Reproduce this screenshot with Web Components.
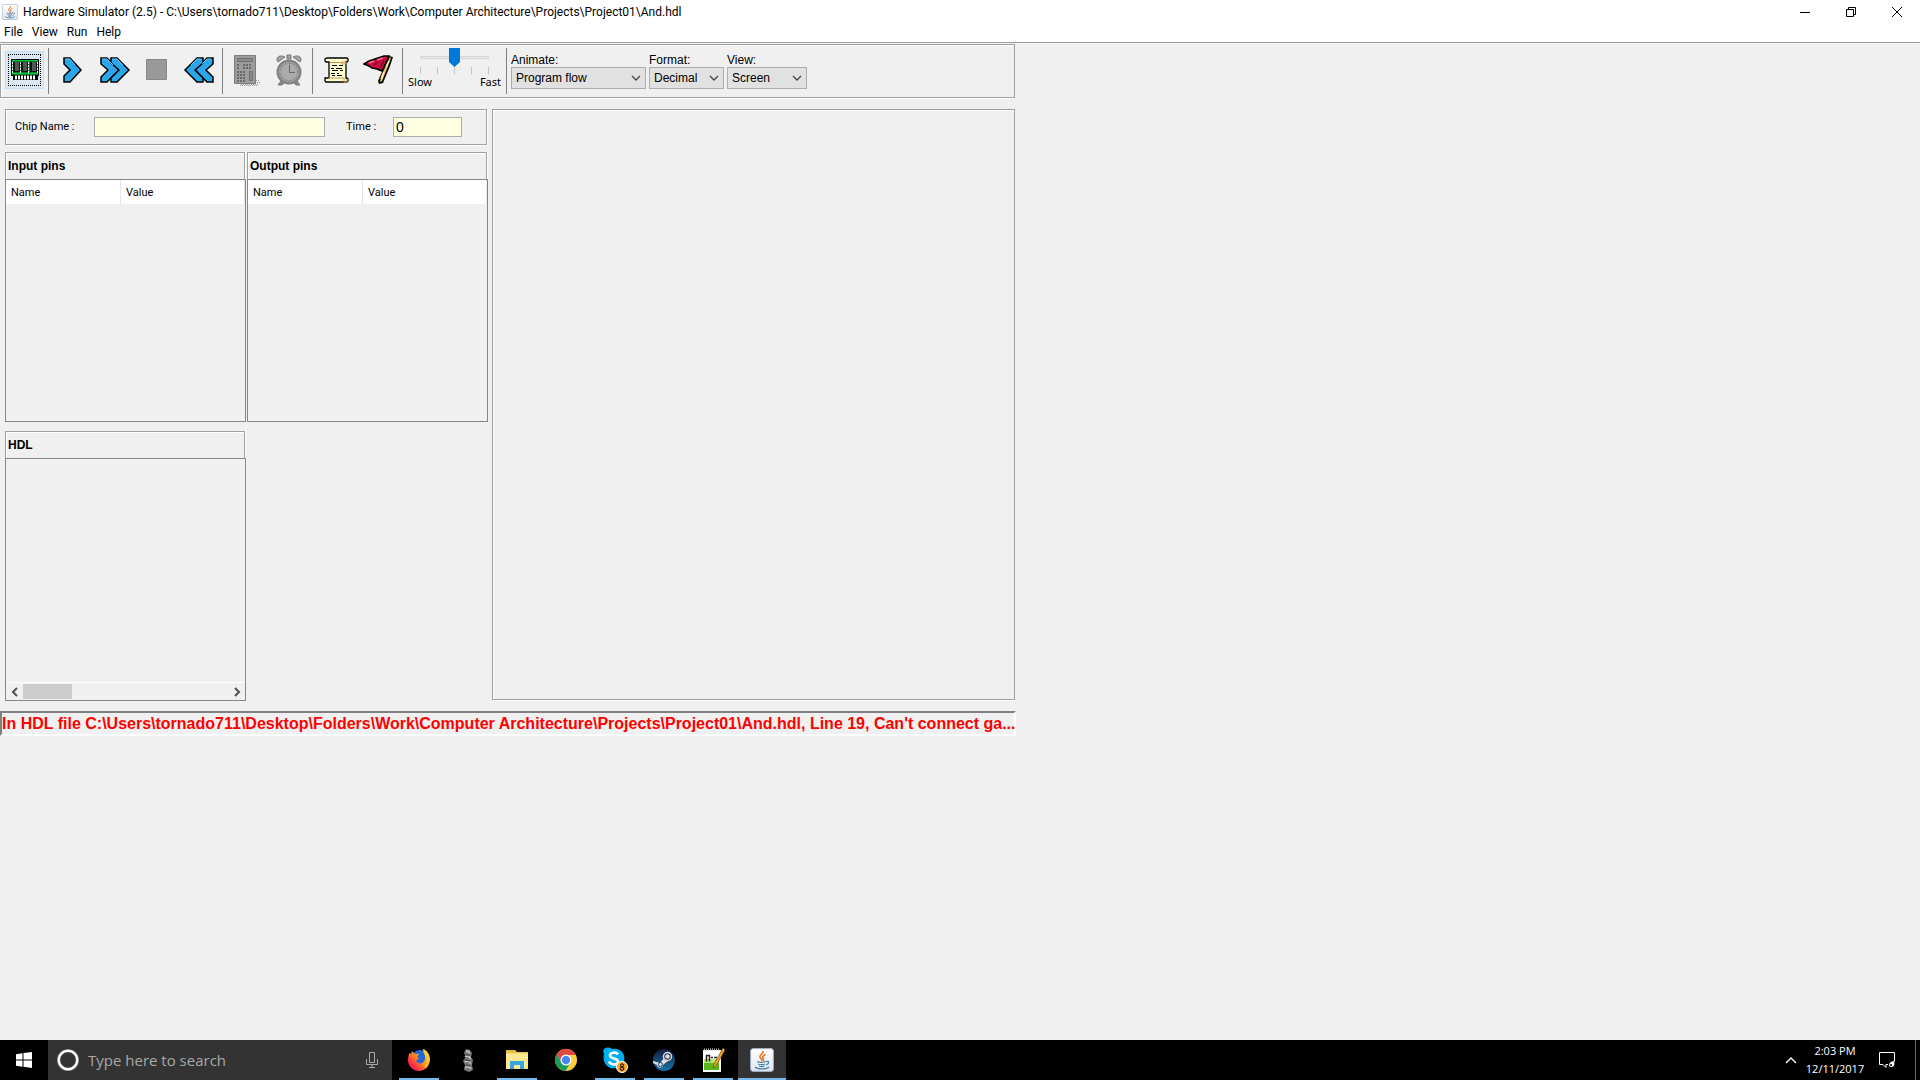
<!DOCTYPE html>
<html lang="en">
<head>
<meta charset="utf-8">
<title>Hardware Simulator (2.5)</title>
<style>
    body { margin: 0; background: #f0f0f0; color: #000; font: 12px/16px "Open Sans", "Noto Sans", sans-serif; }
</style>
</head>
<body>
<desktop-screen>
    <title-bar slot="window">Hardware Simulator (2.5) - C:\Users\tornado711\Desktop\Folders\Work\Computer Architecture\Projects\Project01\And.hdl</title-bar>
    <menu-bar slot="window"></menu-bar>
    <hardware-simulator slot="window"></hardware-simulator>
    <task-bar slot="taskbar"></task-bar>
</desktop-screen>

<script>
// every drawing of the page, by name: [width, height, markup]
const icons = {
    java: [24, 24, `
        <defs><linearGradient id="j" x2="0" y2="1"><stop offset="0" stop-color="#fff"/><stop offset="1" stop-color="#dfe7f1"/></linearGradient></defs>
        <rect x=".6" y=".6" width="22.800" height="22.800" rx="2.500" fill="url(#j)" stroke="#9fb0c2"/>
        <path d="M12.500 3c2 2-3.500 4-2.500 6 .5 1.300 2 2 1.500 3.500M15.500 6.500c-2 1-3.500 2-2.500 3.500s.8 2-.5 3" fill="none" stroke="#e76f1d" stroke-width="1.500"/>
        <path d="M7 13.500c3 1 7 .8 9 0M8 16c2 .8 5 .8 7 0M9 18c1.500.6 4 .6 5.500 0M5 19c2 2.500 11.500 2.500 14 0M16 13.500c3-1 4 2 0 3.300" fill="none" stroke="#5382a1" stroke-width="1.300"/>`],
    minimize: [10, 10, `<path d="M0 5.500h10" stroke="#000"/>`],
    restore: [10, 10, `<path d="M.5 2.500h7v7h-7zM2.500 2.500v-2h7v7h-2" fill="none" stroke="#000"/>`],
    close: [10, 10, `<path d="M0 0l10 10M10 0L0 10" stroke="#000"/>`],
    chip: [28, 22, `
        <path d="M0 0h28v17h-1v4H2v-4H0z" fill="#000"/>
        <path d="M1 1h26v15H1z" fill="#00802b"/>
        <path d="M1 1.500h26M1 14.500h26" stroke="#12c33c"/>
        <path d="M2 3h7v10H2zM10 3h7v10h-7zM19 3h7v10h-7z" fill="#111"/>
        <path d="M4 3h4v9H4zM12 3h4v9h-4zM21 3h4v9h-4z" fill="#555"/>
        <path d="M1.500 3v11M9.500 3v11M17.500 3v11M26.500 3v11" stroke="#fff" stroke-dasharray="2 1"/>
        <path d="M4 18.500h21" stroke="#fff" stroke-width="4" stroke-dasharray="2 1"/>`],
    step: [22, 28, `<path d="M2 2h6l11 12L8 26H2v-6l6-6-6-6z" fill="#2ba6ea" stroke="#000" stroke-width="1.500"/><path d="M3 3h5l5 6" fill="none" stroke="#5fc0f5"/>`],
    run: [32, 28, `<path d="M2 2h6l12 12L8 26H2v-5l7-7-7-6z" fill="#2ba6ea" stroke="#000" stroke-width="1.500"/><path d="M12 2h6l12 12-12 12h-6v-4l8-8-8-7z" fill="#2ba6ea" stroke="#000" stroke-width="1.500"/><path d="M3 3h5l6 6M13 3h5l6 6" fill="none" stroke="#5fc0f5"/>`],
    stop: [22, 28, `<path d="M.5 3.500h20v20H.5z" fill="#999" stroke="#888"/>`],
    rewind: [32, 28, `<path d="M30 2h-6L12 14l12 12h6v-5l-7-7 7-6z" fill="#2ba6ea" stroke="#000" stroke-width="1.500"/><path d="M20 2h-6L2 14l12 12h6v-4l-8-8 8-7z" fill="#2ba6ea" stroke="#000" stroke-width="1.500"/><path d="M28 3h-4l-5 5M18 3h-4L8 9" fill="none" stroke="#5fc0f5"/>`],
    calculator: [28, 32, `
        <path d="M1.500 1.500h21v28h-21z" fill="#9c9c9c" stroke="#7c7c7c"/>
        <path d="M4.500 4.500h15v3h-15z" fill="#8d8d8d" stroke="#6f6f6f"/>
        <path d="M4 11h3M10 11h9M4 14h3M10 14h9M4 18h9M4 21h9M4 24h9M4 27h9" stroke="#6c6c6c" stroke-width="2" stroke-dasharray="2 1"/>
        <path d="M16.500 17.500h3v9h-3z" fill="#8a8a8a" stroke="#6f6f6f"/>
        <path d="M23 26.500h4M24 28.500h4M8 30.500h18M7 31.500h18" stroke="#999" stroke-dasharray="1 1"/>`],
    clock: [28, 32, `
        <path d="M3 8C0 4 4 0 10 3zM25 8c3-4-1-8-7-5zM12 1h4v4h-4z" fill="#a5a5a5" stroke="#777"/>
        <path d="M6 27l-3 4h4l3-3M22 27l3 4h-4l-3-3" fill="#888" stroke="#777"/>
        <circle cx="14" cy="18" r="11.500" fill="#999" stroke="#808080" stroke-width="2"/>
        <circle cx="14" cy="18" r="8.500" fill="#ababab" stroke="#777" stroke-dasharray="1 3"/>
        <path d="M14.500 11v7.500H20" fill="none" stroke="#666"/>`],
    script: [26, 28, `
        <path d="M5 4h16v20H5z" fill="#ffffcd"/>
        <path d="M3 2h20l1 1v2l-1 1h-1v16h1l1 1v2l-1 1H2l-1-1v-3h4V6H2L1 5V3z" fill="#ffffcd" stroke="#000" stroke-width="1.300"/>
        <path d="M22 4v2h-4v2h4v-2M4 22h16v4h3v-3" fill="none" stroke="#c48f60"/>
        <path d="M6 6.500h12" stroke="#c48f60"/>
        <path d="M8 9.500h5M15 9.500h4M7 12.500h3M12 12.500h6M8 14.500h6M16 14.500h3M7 17.500h4M13 17.500h2M8 19.500h3M13 19.500h5" stroke="#000"/>`],
    flag: [32, 32, `
        <path d="M26 2l4 1-3 9-7 17-4 1-1-3z" fill="#000"/>
        <path d="M27 3l1 1-3 8-6 15-2 1 2-8z" fill="#f0c95f"/>
        <path d="M26 7l-3 6M21 18l-3 7" stroke="#fff3b0" stroke-width="1.500"/>
        <path d="M1 10l5-3 9-3 6-2h5l-7 15-5-2-5-1-3-2z" fill="#c80b40" stroke="#000" stroke-width="1.500"/>
        <path d="M6 9l5-2M14 6l6-2" stroke="#ff6d93" stroke-width="1.500"/>
        <path d="M11 11l4-4M17 14l4-7" stroke="#7d0828" stroke-width="1.500"/>`],
    down: [10, 6, `<path d="M1 1l4 4 4-4" fill="none" stroke="#444" stroke-width="1.300"/>`],
    left: [8, 10, `<path d="M6 1L2 5l4 4" fill="none" stroke="#505050" stroke-width="2"/>`],
    right: [8, 10, `<path d="M2 1l4 4-4 4" fill="none" stroke="#505050" stroke-width="2"/>`],
    windows: [16, 16, `<path d="M0 2.200L6.500 1.300V7.500H0zM7.500 1.100L16 0v7.500H7.500zM0 8.500h6.500v6.200L0 13.800zM7.500 8.500H16V16l-8.500-1.200z" fill="#fff"/>`],
    cortana: [22, 22, `<circle cx="11" cy="11" r="9.300" fill="none" stroke="#aaa" stroke-width="3"/><circle cx="11" cy="11" r="9.300" fill="none" stroke="#fff" stroke-width="2"/>`],
    mic: [12, 16, `<path d="M3.500.5h5v10h-5zM.5 7v5.500h11V7M6 12.500v3M3 15.500h6" fill="none" stroke="#aaa"/>`],
    firefox: [24, 24, `
        <defs><linearGradient id="f" x1="1" x2="0" y2="1"><stop offset="0" stop-color="#fff13a"/><stop offset=".45" stop-color="#ff9416"/><stop offset=".75" stop-color="#ff3040"/><stop offset="1" stop-color="#e40aa0"/></linearGradient></defs>
        <circle cx="13" cy="10" r="8" fill="#2168d8"/>
        <path d="M2 5l2 1 1-3 3 3h4l-2 3 2 1-3 3c2 4 8 3 9-2 1-4-2-6-2-10 4 1 7 6 7 10 0 7-5 12-11 12S1 18 1 12c0-3 1-5 1-7z" fill="url(#f)"/>
        <path d="M17 4c5 3 6 10 1 15" fill="none" stroke="#ffd02b" stroke-width="2"/>`],
    figurine: [12, 24, `
        <path d="M4 1l4 1 2 3-1 4 2 3-1 5 1 5-4 2-5-2 1-5-2-4 3-4-2-4z" fill="#777"/>
        <path d="M4 4c2-2 4 0 3 2M3 9c2-2 6 0 5 2M3 14c2-2 6 0 5 2M3 20c2-2 5-1 6 1" fill="none" stroke="#c4c4c4" stroke-width="1.500"/>
        <path d="M4 7h4M3 12l5 1M4 17l4 1" fill="none" stroke="#333"/>`],
    explorer: [24, 22, `
        <path d="M1 3V1h9l2 2h11v17H1z" fill="#e9b93c"/><path d="M1 4h22v16H1z" fill="#ffe693"/><path d="M1 4h22" stroke="#f5cf62"/>
        <path d="M5 20v-8h14v8h-4v-4H9v4z" fill="#35a7df"/>`],
    chrome: [24, 24, `
        <circle cx="12" cy="12" r="11" fill="#ffcd40"/>
        <path d="M2.500 6.500A11 11 0 0 1 22 7H12L7.700 14.500z" fill="#dd4b3e"/>
        <path d="M2.500 6.500a11 11 0 0 0 9 16.500l5-8.500H7.700z" fill="#1a9c59"/>
        <circle cx="12" cy="12" r="5.500" fill="#fff"/><circle cx="12" cy="12" r="4.200" fill="#4688f1"/>`],
    skype: [26, 26, `
        <path d="M2 7c-3-6 4-8 8-5 8-2 14 5 12 11 3 6-2 11-8 8C6 23 0 16 2 7z" fill="#00aff0"/>
        <path d="M16 7.500c-2-3-8-2-8 1 0 4 8 2 8 6 0 4-7 4-9 0" fill="none" stroke="#fff" stroke-width="2.600"/>
        <circle cx="20" cy="20" r="5.500" fill="#f9a11b" stroke="#fff"/><circle cx="20" cy="18.300" r="1.500" fill="none" stroke="#000"/><circle cx="20" cy="21.700" r="1.700" fill="none" stroke="#000"/>`],
    steam: [24, 24, `
        <defs><linearGradient id="s" x2="0" y2="1"><stop offset="0" stop-color="#111d3c"/><stop offset="1" stop-color="#1874a9"/></linearGradient></defs>
        <circle cx="12" cy="12" r="11" fill="url(#s)"/>
        <path d="M1 13l7 2 4-5 5 2-6 5c0 3-5 4-6 0l-4-2z" fill="#ddd"/><circle cx="15.500" cy="8.500" r="4" fill="#17264a" stroke="#ddd" stroke-width="1.500"/>
        <circle cx="15.500" cy="8.500" r="2.300" fill="#ddd"/><circle cx="8.500" cy="16.500" r="2" fill="none" stroke="#28466f"/>`],
    notepad: [24, 26, `
        <path d="M2 3h18v22H2z" fill="#fff"/><path d="M3 14h15v9H3z" fill="#58b819"/><path d="M3 12h15v4H3z" fill="#b5e578"/>
        <path d="M3 2.500h15" stroke="#aaa" stroke-width="2" stroke-dasharray="1 1"/><path d="M5.500 14.500V8.500h3v6M10 10.500h2M13 10.500h3" stroke="#222" stroke-width="1.500" fill="none"/>
        <path d="M22 1l2 2-9 16-3 2 1-4z" fill="#eea52d" stroke="#70490a" stroke-width=".7"/>`],
    up: [12, 8, `<path d="M1 7l5-5 5 5" fill="none" stroke="#fff" stroke-width="1.300"/>`],
    action: [18, 18, `<path d="M5 13.500H1.500v-12h15v9M5 13.500l3 3v-3h2" fill="none" stroke="#fff"/><path d="M16 10c-6 1-6 6-3 6s4-2 3-6z" fill="#fff"/><circle cx="13" cy="14" r="1" fill="#000"/>`]
};

function define(name, html, setup) {
    const template = document.createElement('template');
    template.innerHTML = html;
    customElements.define(name, class extends HTMLElement {
        constructor() {
            super();
            this.attachShadow({ mode: 'open' }).appendChild(template.content.cloneNode(true));
        }
        connectedCallback() {
            if (setup) setup(this, this.shadowRoot);
        }
    });
}

// buttons that hold nothing but an icon take it from their host's attributes
function fillIconButton(el, root) {
    const button = root.querySelector('button');
    const icon = document.createElement('app-icon');
    icon.setAttribute('name', el.getAttribute('icon'));
    button.setAttribute('aria-label', el.getAttribute('label'));
    button.replaceChildren(icon);
}

define('app-icon', `
    <style>
        :host { display: inline-flex; flex: none; }
        svg { display: block; }
    </style>
    <svg aria-hidden="true"></svg>
`, (el, root) => {
    const [width, height, markup] = icons[el.getAttribute('name')];
    const size = Number(el.getAttribute('size')) || width;
    const svg = root.querySelector('svg');
    svg.setAttribute('viewBox', `0 0 ${width} ${height}`);
    svg.setAttribute('width', size);
    svg.setAttribute('height', Math.round(size * height / width));
    svg.innerHTML = markup;
});

define('desktop-screen', `
    <style>
        :host { display: flex; flex-direction: column; min-height: 100vh; }
        main { flex: 1; }
    </style>
    <main><slot name="window"></slot></main>
    <slot name="taskbar"></slot>
`);

define('title-bar', `
    <style>
        :host { display: flex; align-items: center; height: 23px; background: #fff; }
        app-icon { margin: 0 5px 0 2px; }
        .title { flex: 1; white-space: nowrap; font: 12px/16px Roboto, sans-serif; }
        .controls { display: flex; }
        .controls app-icon { margin: 0; }
        button { width: 46px; height: 20px; padding: 0; border: 0; background: none; display: grid; place-items: center; }
    </style>
    <app-icon name="java" size="16"></app-icon>
    <span class="title"><slot></slot></span>
    <div class="controls">
        <button aria-label="Minimize"><app-icon name="minimize"></app-icon></button>
        <button aria-label="Restore"><app-icon name="restore"></app-icon></button>
        <button aria-label="Close"><app-icon name="close"></app-icon></button>
    </div>
`);

define('menu-bar', `
    <style>
        :host { display: block; background: #fff; border-bottom: 1px solid #a0a0a0; }
        nav { display: flex; height: 19px; padding-left: 4px; gap: 9px; }
        button { padding: 0; border: 0; background: none; color: #000; font: 12px/19px Roboto, sans-serif; }
    </style>
    <nav>
        <button>File</button>
        <button>View</button>
        <button>Run</button>
        <button>Help</button>
    </nav>
`);

define('tool-button', `
    <style>
        :host { display: block; margin-top: 3px; }
        button { display: grid; place-items: center; width: 39px; height: 38px; padding: 0; border: 0; background: none; }
        :host([selected]) button { background: #dbe8f3; border: 1px solid #c4def5; }
        :host([selected]) app-icon { width: 31px; height: 30px; align-items: center; justify-content: center; border: 1px dotted #000; }
    </style>
    <button></button>
`, fillIconButton);

define('speed-slider', `
    <style>
        :host { display: block; width: 95px; padding: 0 7px; box-sizing: border-box; font: 11px/14px "Noto Sans", sans-serif; }
        input { appearance: none; display: block; width: 81px; height: 19px; margin: 0; background: linear-gradient(#e7eaea, #e7eaea) center / 67px 1px no-repeat, linear-gradient(#d6d6d6, #d6d6d6) center / 69px 3px no-repeat; }
        input::-webkit-slider-thumb { appearance: none; width: 11px; height: 19px; background: #0078d7; clip-path: polygon(0 0, 100% 0, 100% 74%, 50% 100%, 0 74%); }
        .ticks { display: flex; justify-content: space-between; width: 69px; margin: 0 6px; }
        .ticks i { width: 1px; height: 7px; background: #c4c4c4; }
        .ends { display: flex; justify-content: space-between; margin: 0 -6px; padding-top: 1px; }
    </style>
    <input type="range" min="1" max="5" value="3" aria-label="Speed">
    <div class="ticks"><i></i><i></i><i></i><i></i><i></i></div>
    <div class="ends"><span>Slow</span><span>Fast</span></div>
`);

define('combo-box', `
    <style>
        :host { display: block; font: 12px/14px "Liberation Sans", Arial, sans-serif; }
        label { display: block; }
        .field { display: grid; align-items: center; }
        select, app-icon { grid-area: 1 / 1; }
        select { appearance: none; width: 100%; height: 22px; margin: 0; padding: 0 24px 0 4px; border: 1px solid #adadad; border-radius: 0; background: #e1e1e1; color: #000; font: inherit; }
        app-icon { justify-self: end; margin-right: 5px; pointer-events: none; }
    </style>
    <label for="choice"></label>
    <div class="field">
        <select id="choice"></select>
        <app-icon name="down"></app-icon>
    </div>
`, (el, root) => {
    root.querySelector('label').textContent = el.getAttribute('label');
    root.querySelector('select').innerHTML = el.getAttribute('options').split(',').map(o => `<option>${o}</option>`).join('');
});

define('tool-bar', `
    <style>
        :host { display: flex; align-items: flex-start; height: 54px; box-sizing: border-box; padding: 3px 0 0 4px; border: 1px solid #a0a0a0; box-shadow: inset 1px 1px #fff, 0 1px #fff; }
        hr { width: 1px; height: 46px; margin: 0 4px; border: 0; background: #808080; }
        .group { display: flex; gap: 3px; }
        .choices { display: flex; gap: 3px; padding-top: 5px; }
        .animate { width: 135px; }
        .format { width: 75px; }
        .view { width: 80px; }
    </style>
    <tool-button icon="chip" label="Load chip" selected></tool-button>
    <hr>
    <div class="group">
        <tool-button icon="step" label="Single step"></tool-button>
        <tool-button icon="run" label="Run"></tool-button>
        <tool-button icon="stop" label="Stop"></tool-button>
        <tool-button icon="rewind" label="Reset"></tool-button>
    </div>
    <hr>
    <div class="group">
        <tool-button icon="calculator" label="Evaluate"></tool-button>
        <tool-button icon="clock" label="Tick tock"></tool-button>
    </div>
    <hr>
    <div class="group">
        <tool-button icon="script" label="Load script"></tool-button>
        <tool-button icon="flag" label="Breakpoints"></tool-button>
    </div>
    <hr>
    <speed-slider></speed-slider>
    <hr>
    <div class="choices">
        <combo-box class="animate" label="Animate:" options="Program flow,Program &amp; data flow,No animation"></combo-box>
        <combo-box class="format" label="Format:" options="Decimal,Hexa,Binary"></combo-box>
        <combo-box class="view" label="View:" options="Screen,Script,Output,Compare"></combo-box>
    </div>
`);

define('chip-info', `
    <style>
        :host { display: flex; align-items: center; height: 36px; box-sizing: border-box; margin-right: 1px; padding: 0 24px 0 9px; border: 1px solid #a0a0a0; box-shadow: inset 1px 1px #fff, 1px 1px #fff; font: 11px/16px Roboto, sans-serif; }
        label { flex: none; }
        .name { width: 79px; }
        .time { width: 47px; margin-left: 21px; }
        input { min-width: 0; height: 20px; box-sizing: border-box; padding: 0 2px; border: 1px solid #abadb3; background: #ffffe1; color: #000; font: 14px/18px "Liberation Sans", Arial, sans-serif; }
        #name { flex: 1; }
        #time { width: 69px; }
    </style>
    <label class="name" for="name">Chip Name :</label><input id="name">
    <label class="time" for="time">Time :</label><input id="time" value="0">
`);

define('titled-panel', `
    <style>
        :host { display: block; }
        h2 { height: 27px; box-sizing: border-box; margin: 0 1px 0 0; padding: 0 2px; border: 1px solid #a0a0a0; border-bottom: 0; box-shadow: inset 1px 1px #fff, 1px 0 #fff; font: bold 12px/26px "Liberation Sans", Arial, sans-serif; }
        .body { display: flex; flex-direction: column; height: 243px; box-sizing: border-box; border: 1px solid #828790; }
    </style>
    <h2></h2>
    <div class="body"><slot></slot></div>
`, (el, root) => {
    root.querySelector('h2').textContent = el.getAttribute('heading');
});

define('pin-table', `
    <style>
        :host { display: block; }
        table { width: 100%; border-collapse: collapse; table-layout: fixed; background: #fff; font: 11px/16px Roboto, sans-serif; }
        th { height: 24px; box-sizing: border-box; padding: 2px 5px 0; text-align: left; font-weight: normal; border-right: 1px solid #e5e5e5; }
        th:first-child { width: 48%; }
    </style>
    <table>
        <thead><tr><th scope="col">Name</th><th scope="col">Value</th></tr></thead>
        <tbody></tbody>
    </table>
`);

define('scroll-strip', `
    <style>
        :host { display: flex; align-items: center; height: 17px; margin-top: auto; border-top: 1px solid #fff; }
        button { display: grid; place-items: center; width: 17px; height: 17px; padding: 0; border: 0; background: none; }
        .track { flex: 1; }
        .thumb { width: 24%; height: 15px; background: #cdcdcd; }
    </style>
    <button aria-label="Scroll left"><app-icon name="left"></app-icon></button>
    <div class="track"><div class="thumb"></div></div>
    <button aria-label="Scroll right"><app-icon name="right"></app-icon></button>
`);

define('status-line', `
    <style>
        :host { display: block; box-sizing: border-box; height: 25px; white-space: nowrap; border: 2px solid; border-color: #808080 #fff #fff #808080; color: #f00; font: bold 16px/22px "Liberation Sans", Arial, sans-serif; }
    </style>
    <slot></slot>
`);

define('hardware-simulator', `
    <style>
        :host { display: block; max-width: 1016px; padding-top: 1px; }
        tool-bar { margin-right: 1px; }
        .work { display: grid; grid-template-columns: 483fr 523fr; gap: 4px; padding: 11px 1px 10px 5px; }
        .left { display: flex; flex-direction: column; gap: 7px; }
        .panels { display: grid; grid-template-columns: 1fr 1fr; gap: 9px 1px; }
        .stage { margin-bottom: 1px; border: 1px solid #a0a0a0; box-shadow: inset 1px 1px #fff, 0 1px #fff; }
    </style>
    <tool-bar></tool-bar>
    <div class="work">
        <div class="left">
            <chip-info></chip-info>
            <div class="panels">
                <titled-panel heading="Input pins"><pin-table></pin-table></titled-panel>
                <titled-panel heading="Output pins"><pin-table></pin-table></titled-panel>
                <titled-panel heading="HDL"><scroll-strip></scroll-strip></titled-panel>
            </div>
        </div>
        <div class="stage"></div>
    </div>
    <status-line>In HDL file C:\\Users\\tornado711\\Desktop\\Folders\\Work\\Computer Architecture\\Projects\\Project01\\And.hdl, Line 19, Can't connect ga...</status-line>
`);

define('task-app', `
    <style>
        :host { display: block; }
        button { display: grid; place-items: center; width: 48px; height: 40px; padding: 0; border: 0; background: none; }
        :host([open]) button { background: linear-gradient(#76b9ed, #76b9ed) bottom / 40px 2px no-repeat; }
        :host([active]) button { background: linear-gradient(#76b9ed, #76b9ed) bottom / 48px 2px no-repeat #333; }
    </style>
    <button></button>
`, fillIconButton);

define('task-bar', `
    <style>
        :host { display: flex; align-items: stretch; height: 40px; background: #000; color: #fff; }
        button { display: grid; place-items: center; padding: 0; border: 0; background: none; color: #fff; font: 11px/18px "Open Sans", sans-serif; }
        .start { width: 48px; }
        .search { display: flex; align-items: center; gap: 9px; width: 344px; box-sizing: border-box; padding: 0 14px 0 9px; background: #333; }
        .search input { flex: 1; min-width: 0; padding: 0; border: 0; outline: 0; background: none; color: #fff; font: 15px/20px "Open Sans", sans-serif; }
        .search input::placeholder { color: #a8a8a8; opacity: 1; }
        .apps { display: flex; gap: 1px; margin-left: 3px; }
        .tray { display: flex; gap: 6px; margin-left: auto; }
        .more { width: 12px; }
        .clock { width: 64px; align-content: center; }
        .action { width: 28px; }
        .desktop { width: 5px; margin-left: 8px; border-left: 1px solid #666; }
    </style>
    <button class="start" aria-label="Start"><app-icon name="windows"></app-icon></button>
    <div class="search">
        <app-icon name="cortana"></app-icon>
        <input type="text" placeholder="Type here to search" aria-label="Type here to search">
        <app-icon name="mic"></app-icon>
    </div>
    <div class="apps">
        <task-app icon="firefox" label="Firefox" open></task-app>
        <task-app icon="figurine" label="Game"></task-app>
        <task-app icon="explorer" label="File Explorer" open></task-app>
        <task-app icon="chrome" label="Chrome"></task-app>
        <task-app icon="skype" label="Skype" open></task-app>
        <task-app icon="steam" label="Steam" open></task-app>
        <task-app icon="notepad" label="Notepad++" open></task-app>
        <task-app icon="java" label="Hardware Simulator" active></task-app>
    </div>
    <div class="tray">
        <button class="more" aria-label="Show hidden icons"><app-icon name="up"></app-icon></button>
        <button class="clock"><span>2:03 PM</span><span>12/11/2017</span></button>
        <button class="action" aria-label="Notifications"><app-icon name="action"></app-icon></button>
        <button class="desktop" aria-label="Show desktop"></button>
    </div>
`);
</script>
</body>
</html>
